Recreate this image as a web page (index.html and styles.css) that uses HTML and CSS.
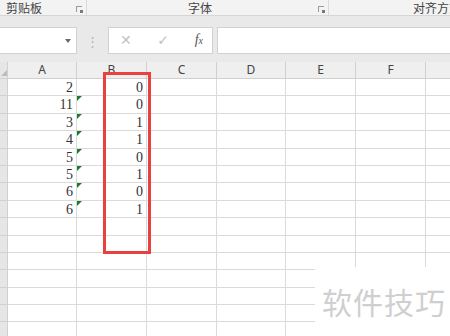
FILE: index.html
```html
<!DOCTYPE html>
<html lang="zh">
<head>
  <meta charset="UTF-8">
  <title>Excel 工作表</title>
  <link rel="stylesheet" href="styles.css">
</head>
<body>
  <div class="ribbon-labels">
    <div class="group group-clip">
      <span class="group-name">剪贴板</span>
      <span class="launcher"></span>
    </div>
    <div class="group group-font">
      <span class="group-name">字体</span>
      <span class="launcher"></span>
    </div>
    <div class="group group-align">
      <span class="group-name">对齐方式</span>
    </div>
  </div>

  <div class="formula-bar">
    <div class="name-box"><span class="arrow"></span></div>
    <div class="dots">⋮</div>
    <div class="fx-buttons">
      <span class="btn-x">✕</span>
      <span class="btn-ok">✓</span>
      <span class="btn-fx">f<sub>x</sub></span>
    </div>
    <div class="formula-input"></div>
  </div>

  <div class="sheet">
    <div class="grid" id="grid"></div>
    <div class="highlight"></div>
    <div class="watermark">软件技巧</div>
  </div>

  <script>
    const cols = ["A", "B", "C", "D", "E", "F", ""];
    const colA = ["2", "11", "3", "4", "5", "5", "6", "6"];
    const colB = ["0", "0", "1", "1", "0", "1", "0", "1"];
    const grid = document.getElementById("grid");

    function cell(cls, text) {
      const d = document.createElement("div");
      d.className = cls;
      d.textContent = text || "";
      grid.appendChild(d);
    }

    cell("corner");
    cols.forEach(c => cell("col-head", c));

    for (let r = 0; r < 15; r++) {
      cell("row-head");
      cell("cell num", colA[r]);
      cell(r >= 1 && r < 8 ? "cell num flag" : "cell num", colB[r]);
      for (let i = 0; i < 5; i++) cell("cell");
    }
  </script>
</body>
</html>
```

FILE: styles.css
```css
* {
  margin: 0;
  padding: 0;
  box-sizing: border-box;
}

body {
  width: 450px;
  height: 336px;
  overflow: hidden;
  background: #fff;
  font-family: 'Noto Sans CJK SC', 'Noto Sans', sans-serif;
  color: #444;
}

/* Cintas del ribbon */
.ribbon-labels {
  display: flex;
  height: 16px;
  background: #f3f3f3;
  border-bottom: 1px solid #d6d6d6;
  font-size: 12px;
  line-height: 15px;
}

.group {
  display: flex;
  align-items: center;
  flex-shrink: 0;
  height: 15px;
  border-right: 1px solid #dadada;
}

.group-clip {
  width: 87px;
  padding-left: 6px;
  justify-content: space-between;
  padding-right: 4px;
}

.group-font {
  width: 242px;
  padding-left: 101px;
  justify-content: space-between;
  padding-right: 4px;
}

.group-align {
  flex: 1 1 auto;
  min-width: 0;
  border-right: none;
  padding-left: 84px;
  overflow: hidden;
}

.group-name {
  white-space: nowrap;
}

.launcher {
  width: 6px;
  height: 6px;
  border: 1px solid #9a9a9a;
  border-width: 1px 0 0 1px;
  position: relative;
  margin-top: 2px;
}

.launcher::after {
  content: "";
  position: absolute;
  right: -1px;
  bottom: -1px;
  width: 3px;
  height: 3px;
  background: #7a7a7a;
}

/* Barra de fórmulas */
.formula-bar {
  display: flex;
  align-items: center;
  height: 46px;
  background: #e9e9e9;
  padding-top: 2px;
}

.name-box {
  width: 77px;
  height: 27px;
  background: #fff;
  border: 1px solid #d2d2d2;
  border-left: none;
  position: relative;
}

.arrow {
  position: absolute;
  right: 5px;
  top: 11px;
  border-left: 3.5px solid transparent;
  border-right: 3.5px solid transparent;
  border-top: 4px solid #6a6a6a;
}

.dots {
  width: 31px;
  text-align: center;
  color: #b5b5b5;
  font-size: 13px;
}

.fx-buttons {
  width: 105px;
  height: 27px;
  background: #fff;
  border: 1px solid #d2d2d2;
  display: flex;
  align-items: center;
  justify-content: space-between;
  padding: 0 9px 0 11px;
}

.btn-x,
.btn-ok {
  color: #c2c2c2;
  font-size: 14px;
  font-family: 'DejaVu Sans', sans-serif;
}

.btn-fx {
  font-family: 'Liberation Serif', serif;
  font-style: italic;
  font-size: 14px;
  color: #555;
}

.btn-fx sub {
  font-size: 10px;
  vertical-align: baseline;
}

.formula-input {
  flex: 1;
  height: 27px;
  margin-left: 4px;
  background: #fff;
  border: 1px solid #d2d2d2;
  border-right: none;
}

/* Hoja */
.sheet {
  position: relative;
  height: 274px;
  overflow: hidden;
}

.grid {
  display: grid;
  grid-template-columns: 8px 69px 70px 70px 69px 70px 70px 40px;
  grid-template-rows: 17px;
  grid-auto-rows: 17.4px;
}

.corner,
.row-head,
.col-head {
  background: #efefef;
  border-right: 1px solid #d0d0d0;
  border-bottom: 1px solid #d0d0d0;
}

.corner {
  position: relative;
  background: #e6e6e6;
}

.corner::after {
  content: "";
  position: absolute;
  left: 1px;
  bottom: 2px;
  border-top: 6px solid transparent;
  border-right: 6px solid #bcbcbc;
}

.row-head {
  background: #e6e6e6;
}

.col-head {
  font-family: 'Noto Sans', sans-serif;
  font-size: 12px;
  line-height: 16px;
  text-align: center;
  color: #444;
}

.cell {
  border-right: 1px solid #dadada;
  border-bottom: 1px solid #dadada;
  position: relative;
}

.num {
  font-family: 'Liberation Serif', serif;
  font-size: 14px;
  line-height: 17px;
  text-align: right;
  padding-right: 3px;
  color: #333;
}

.flag::before {
  content: "";
  position: absolute;
  left: 0;
  top: 0;
  border-top: 5px solid #1f7a2c;
  border-right: 5px solid transparent;
}

.highlight {
  position: absolute;
  left: 103px;
  top: 10px;
  width: 48px;
  height: 182px;
  border: 3px solid #e8413f;
}

.watermark {
  position: absolute;
  left: 315px;
  top: 205px;
  width: 135px;
  height: 70px;
  background: #fff;
  color: #cfcfcf;
  font-size: 30px;
  line-height: 30px;
  padding: 19px 0 0 7px;
  letter-spacing: 1px;
}
```
